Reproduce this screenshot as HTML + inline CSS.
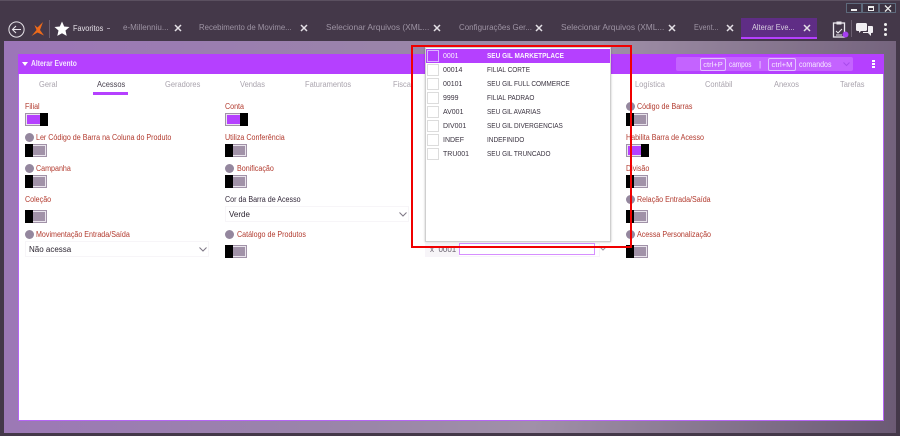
<!DOCTYPE html>
<html lang="pt"><head><meta charset="utf-8"><title>Alterar Evento</title>
<style>
*{box-sizing:border-box}
html,body{margin:0;padding:0;width:900px;height:436px;overflow:hidden}
body{background:#443849;font-family:"Liberation Sans",sans-serif;font-size:8.2px;position:relative}
.a{position:absolute;white-space:nowrap}
.tab{color:#9d93a3;font-size:8.4px;top:21px;line-height:12px;transform-origin:0 0}
.x{top:24px;width:8px;height:8px}
.lab{color:#b23a2e;font-size:8px;line-height:10px;margin-top:1px;transform:scaleX(.89);transform-origin:0 0}
.lab.k{color:#33293a}
.tg{position:absolute;width:22px;height:13px;background:#a192a8;border:1px solid #a192a8;box-shadow:inset 0 0 0 1px #e9e4ec}
.tg:before{content:"";position:absolute;left:-1px;top:-1px;width:8px;height:13px;background:#000}
.tg.on{background:#b540ff;border-color:#a192a8}
.tg.on:before{left:14px}
.i{position:absolute;width:9px;height:9px;border-radius:50%;background:#94879e}
.sel{position:absolute;width:184px;height:16px;background:#fff;border:1px solid #f7f5f8;color:#2b2430;font-size:8px;line-height:16px;padding-left:3px}
.tb{color:#a9a3ad;font-size:8.6px;top:79px;line-height:11px;transform:scaleX(.87);transform-origin:0 0}
.row{position:absolute;left:1px;width:183px;height:14px;color:#3a3340;font-size:7.6px;line-height:14px}
.row b{font-weight:normal;position:absolute;left:17px;transform:scaleX(.92);transform-origin:0 0}
.row u{text-decoration:none;position:absolute;left:61px;white-space:nowrap;transform:scaleX(.85);transform-origin:0 0}
.row i{position:absolute;left:1px;top:1px;width:12px;height:12px;border:1px solid #dcdcdc;background:#fff}
.key{border:1px solid #e2c0ff;border-radius:2px;color:#f6eaff;font-size:7.6px;line-height:11px;height:13px;top:58px;text-align:center}
.ht{top:58px;color:#f6eaff;font-size:8px;line-height:13px;transform-origin:0 0}
</style></head>
<body>
<!-- window frame -->
<div class="a" style="left:0;top:0;width:900px;height:1px;background:#5b5060"></div>
<div class="a" style="left:4px;top:41px;width:892px;height:392px;background:linear-gradient(100deg,#9c76b8 0%,#9a86a8 45%,#a090a8 62%,#6b5a74 100%)"></div>

<!-- toolbar left -->
<svg class="a" style="left:8px;top:21px" width="17" height="17" viewBox="0 0 17 17"><circle cx="8.5" cy="8.5" r="7.6" fill="none" stroke="#e8e4ea" stroke-width="1"/><path d="M13 8.5H4.5M8 5L4.5 8.5 8 12" fill="none" stroke="#e8e4ea" stroke-width="1.1"/></svg>
<svg class="a" style="left:31px;top:22px" width="14" height="15" viewBox="0 0 14 15"><path d="M12 0L6.5 5.5 3.5 3 5.5 8 0.5 14 6.5 10.5 13 13.5 9 8z" fill="#ee6a1a"/></svg>
<div class="a" style="left:49px;top:20px;width:1px;height:18px;background:#6b5f70"></div>
<svg class="a" style="left:54px;top:21px" width="16" height="16" viewBox="0 0 16 16"><path d="M8 .5l2.2 5 5.3.5-4 3.500 1.200 5.400L8 12.200l-4.700 2.700 1.200-5.400-4-3.500 5.300-.5z" fill="#fff"/></svg>
<div class="a" style="left:73px;top:22px;color:#e6e1e8;font-size:8.4px;line-height:12px;transform:scaleX(.88);transform-origin:0 0">Favoritos</div>
<div class="a" style="left:107px;top:28px;width:3px;height:1px;background:#9d93a3"></div>

<!-- tabs -->
<div class="a tab" style="left:123px;transform:scaleX(.96)">e-Millenniu...</div>
<div class="a tab" style="left:199px;transform:scaleX(.93)">Recebimento de Movime...</div>
<div class="a tab" style="left:326px">Selecionar Arquivos (XML...</div>
<div class="a tab" style="left:459px;transform:scaleX(.95)">Configurações Ger...</div>
<div class="a tab" style="left:561px">Selecionar Arquivos (XML...</div>
<div class="a tab" style="left:694px;transform:scaleX(.87)">Event...</div>
<div class="a" style="left:741px;top:18px;width:76px;height:21px;background:#5f2d85;border-bottom:2px solid #b540ff"></div>
<div class="a tab" style="left:752px;color:#d9cfe0;transform:scaleX(.88)">Alterar Eve...</div>
<svg width="0" height="0" style="position:absolute"><defs><path id="xx" d="M1 1L7 7M7 1L1 7" stroke="#e4e0e6" stroke-width="1.5" fill="none"/></defs></svg>
<svg class="a x" style="left:174px" viewBox="0 0 8 8"><use href="#xx"/></svg>
<svg class="a x" style="left:300px" viewBox="0 0 8 8"><use href="#xx"/></svg>
<svg class="a x" style="left:433px" viewBox="0 0 8 8"><use href="#xx"/></svg>
<svg class="a x" style="left:535px" viewBox="0 0 8 8"><use href="#xx"/></svg>
<svg class="a x" style="left:668px" viewBox="0 0 8 8"><use href="#xx"/></svg>
<svg class="a x" style="left:726px" viewBox="0 0 8 8"><use href="#xx"/></svg>
<svg class="a x" style="left:803px" viewBox="0 0 8 8"><use href="#xx"/></svg>

<!-- window buttons -->
<div class="a" style="left:846px;top:3px;width:16px;height:10px;border:1px solid #5e6a7c;background:#3c3342"><div class="a" style="left:4px;top:5px;width:6px;height:2px;background:#eee"></div></div>
<div class="a" style="left:862px;top:3px;width:17px;height:10px;border:1px solid #5e6a7c;background:#3c3342"><div class="a" style="left:5px;top:2px;width:6px;height:5px;border:1px solid #eee;border-top-width:2px"></div></div>
<div class="a" style="left:879px;top:3px;width:17px;height:10px;border:1px solid #5e6a7c;background:#3c3342"><svg class="a" style="left:4px;top:1px" width="8" height="7" viewBox="0 0 8 7"><path d="M1 .5L7 6.500M7 .5L1 6.500" stroke="#eee" stroke-width="1.300"/></svg></div>

<!-- right icons -->
<svg class="a" style="left:831px;top:20px" width="20" height="20" viewBox="0 0 20 20"><rect x="2.500" y="3" width="11" height="14" fill="none" stroke="#ece8ee" stroke-width="1.300"/><rect x="5.500" y="1.500" width="5" height="3" fill="#ece8ee"/><path d="M5 11l2 2 4-4M5 15h6" stroke="#ece8ee" fill="none"/><circle cx="14.500" cy="14.500" r="3" fill="#a63ff0"/></svg>
<div class="a" style="left:851px;top:20px;width:1px;height:17px;background:#6b5f70"></div>
<svg class="a" style="left:856px;top:23px" width="17" height="13" viewBox="0 0 17 13"><rect x="0" y="0" width="11" height="8" rx="1.500" fill="#f2eff3"/><path d="M3 7v3l3-3z" fill="#f2eff3"/><path d="M12 3h4a1 1 0 0 1 1 1v5a1 1 0 0 1-1 1h-1v3l-3-3H7V9h5z" fill="#f2eff3"/></svg>
<div class="a" style="left:884px;top:23px;width:3px;height:3px;background:#eee;border-radius:50%"></div>
<div class="a" style="left:884px;top:28px;width:3px;height:3px;background:#eee;border-radius:50%"></div>
<div class="a" style="left:884px;top:33px;width:3px;height:3px;background:#eee;border-radius:50%"></div>

<!-- panel -->
<div class="a" style="left:18px;top:54px;width:866px;height:367px;background:#fff;border:1px solid #b565f5"></div>
<div class="a" style="left:18px;top:54px;width:866px;height:20px;background:#b540ff"></div>
<div class="a" style="left:22px;top:62px;width:0;height:0;border-left:3px solid transparent;border-right:3px solid transparent;border-top:4px solid #fff"></div>
<div class="a" style="left:31px;top:58px;color:#f3e6ff;font-size:8.2px;font-weight:bold;line-height:12px;transform:scaleX(.82);transform-origin:0 0">Alterar Evento</div>
<div class="a" style="left:676px;top:57px;width:177px;height:14px;background:#c463ff;border-radius:2px"></div>
<div class="a key" style="left:700px;width:26px">ctrl+P</div>
<div class="a ht" style="left:729px;transform:scaleX(.8)">campos</div>
<div class="a ht" style="left:759px">|</div>
<div class="a key" style="left:768px;width:28px">ctrl+M</div>
<div class="a ht" style="left:799px;transform:scaleX(.88)">comandos</div>
<svg class="a" style="left:843px;top:62px" width="7" height="5" viewBox="0 0 7 5"><path d="M.5.5L3.500 3.500 6.500.5" stroke="#a94cec" fill="none"/></svg>
<div class="a" style="left:872px;top:60px;width:3px;height:2px;background:#fff"></div>
<div class="a" style="left:872px;top:63px;width:3px;height:2px;background:#fff"></div>
<div class="a" style="left:872px;top:66px;width:3px;height:2px;background:#fff"></div>

<!-- panel tabs -->
<div class="a tb" style="left:39px">Geral</div>
<div class="a tb" style="left:97px;color:#4a4350">Acessos</div>
<div class="a" style="left:93px;top:92px;width:35px;height:2.500px;background:#b540ff"></div>
<div class="a tb" style="left:165px">Geradores</div>
<div class="a tb" style="left:240px">Vendas</div>
<div class="a tb" style="left:305px">Faturamentos</div>
<div class="a tb" style="left:393px">Fiscal</div>
<div class="a tb" style="left:635px">Logística</div>
<div class="a tb" style="left:705px">Contábil</div>
<div class="a tb" style="left:774px">Anexos</div>
<div class="a tb" style="left:840px">Tarefas</div>

<!-- col 1 -->
<div class="a lab" style="left:25px;top:101px">Filial</div>
<div class="tg on" style="left:25px;top:113px"></div>
<div class="i" style="left:25px;top:133px"></div>
<div class="a lab" style="left:36px;top:132px">Ler Código de Barra na Coluna do Produto</div>
<div class="tg" style="left:25px;top:144px"></div>
<div class="i" style="left:25px;top:164px"></div>
<div class="a lab" style="left:36px;top:163px">Campanha</div>
<div class="tg" style="left:25px;top:175px"></div>
<div class="a lab" style="left:25px;top:194px">Coleção</div>
<div class="tg" style="left:25px;top:210px"></div>
<div class="i" style="left:25px;top:230px"></div>
<div class="a lab" style="left:36px;top:229px">Movimentação Entrada/Saída</div>
<div class="sel" style="left:25px;top:241px">Não acessa</div>
<svg class="a" style="left:199px;top:247px" width="8" height="5" viewBox="0 0 8 5"><path d="M.5.5L4 4 7.500.5" stroke="#7d7684" fill="none"/></svg>

<!-- col 2 -->
<div class="a lab" style="left:225px;top:101px">Conta</div>
<div class="tg on" style="left:225px;top:113px"></div>
<div class="a lab" style="left:225px;top:132px">Utiliza Conferência</div>
<div class="tg" style="left:225px;top:144px"></div>
<div class="i" style="left:225px;top:164px"></div>
<div class="a lab" style="left:237px;top:163px">Bonificação</div>
<div class="tg" style="left:225px;top:175px"></div>
<div class="a lab k" style="left:225px;top:194px">Cor da Barra de Acesso</div>
<div class="sel" style="left:225px;top:206px">Verde</div>
<svg class="a" style="left:399px;top:212px" width="8" height="5" viewBox="0 0 8 5"><path d="M.5.5L4 4 7.500.5" stroke="#7d7684" fill="none"/></svg>
<div class="i" style="left:225px;top:230px"></div>
<div class="a lab" style="left:237px;top:229px">Catálogo de Produtos</div>
<div class="tg" style="left:225px;top:245px"></div>

<!-- col 3 underlying field -->
<div class="a" style="left:425px;top:243px;width:175px;height:14px;background:#fff;border:1px solid #f7f4f9"></div>
<div class="a" style="left:426px;top:243px;width:33px;height:13px;background:#f7f5f8;color:#6a6370;font-size:8px;line-height:13px;padding-left:4px">x&nbsp; 0001</div>
<div class="a" style="left:459px;top:243px;width:136px;height:12px;border:1px solid #d68fff;background:#fff"></div>
<svg class="a" style="left:600px;top:247px" width="6" height="4" viewBox="0 0 6 4"><path d="M.5.5L3 3 5.500.5" stroke="#9a92a0" fill="none"/></svg>

<!-- col 4 -->
<div class="i" style="left:626px;top:102px"></div>
<div class="a lab" style="left:637px;top:101px">Código de Barras</div>
<div class="tg" style="left:626px;top:113px"></div>
<div class="a lab" style="left:626px;top:132px">Habilita Barra de Acesso</div>
<div class="tg on" style="left:626px;top:144px"></div>
<div class="a lab" style="left:626px;top:163px">Divisão</div>
<div class="tg" style="left:626px;top:175px"></div>
<div class="i" style="left:626px;top:195px"></div>
<div class="a lab" style="left:637px;top:194px">Relação Entrada/Saída</div>
<div class="tg" style="left:626px;top:210px"></div>
<div class="i" style="left:626px;top:230px"></div>
<div class="a lab" style="left:637px;top:229px">Acessa Personalização</div>
<div class="tg" style="left:626px;top:245px"></div>

<!-- dropdown -->
<div class="a" style="left:425px;top:47px;width:186px;height:195px;background:#fff;border:1px solid #cfcfcf;box-shadow:0 0 2px rgba(0,0,0,.25)">
  <div class="row" style="top:1px;left:0;width:184px;background:#b540ff;color:#fbf3ff;font-weight:bold"><i style="background:#b540ff;border-color:#dcb4ff"></i><b>0001</b><u>SEU GIL MARKETPLACE</u></div>
  <div class="row" style="top:15px;left:0"><i></i><b>00014</b><u>FILIAL CORTE</u></div>
  <div class="row" style="top:29px;left:0"><i></i><b>00101</b><u>SEU GIL FULL COMMERCE</u></div>
  <div class="row" style="top:43px;left:0"><i></i><b>9999</b><u>FILIAL PADRAO</u></div>
  <div class="row" style="top:57px;left:0"><i></i><b>AV001</b><u>SEU GIL AVARIAS</u></div>
  <div class="row" style="top:71px;left:0"><i></i><b>DIV001</b><u>SEU GIL DIVERGENCIAS</u></div>
  <div class="row" style="top:85px;left:0"><i></i><b>INDEF</b><u>INDEFINIDO</u></div>
  <div class="row" style="top:99px;left:0"><i></i><b>TRU001</b><u>SEU GIL TRUNCADO</u></div>
</div>

<!-- red highlight -->
<div class="a" style="left:411px;top:45px;width:221px;height:203px;border:2px solid #f00000"></div>
</body></html>
